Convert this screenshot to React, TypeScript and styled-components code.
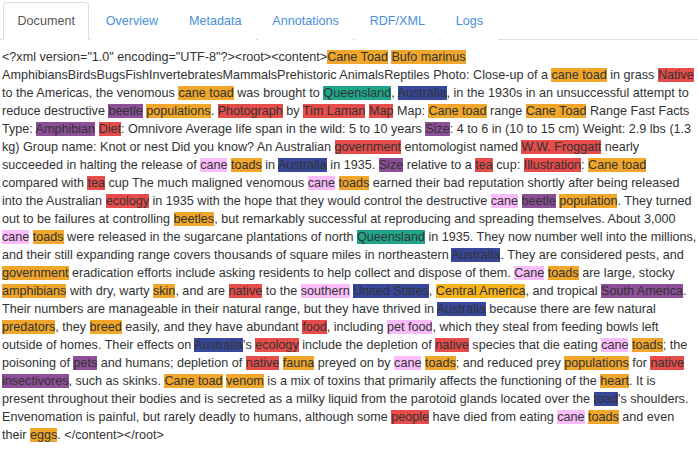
import React from "react";
import styled, { createGlobalStyle } from "styled-components";

const Global = createGlobalStyle`
  html, body { margin: 0; padding: 0; background: #fff; }
  body { font-family: "Liberation Sans", Arial, sans-serif; font-size: 12.6px; color: #333; }
`;

type Tone = "o" | "r" | "p" | "b" | "t" | "k" | "y";

const toneColors: Record<Tone, string> = {
  o: "#efa62a",
  r: "#e54c4a",
  p: "#8c4f98",
  b: "#37479a",
  t: "#1fa58a",
  k: "#fbbcfb",
  y: "#f6b31b",
};

const Page = styled.div`
  width: 698px;
  min-height: 454px;
`;

const TabBar = styled.ul`
  list-style: none;
  margin: 2px 0 0;
  padding: 0 0 0 3px;
  display: flex;
  border-bottom: 1px solid #ddd;
`;

const TabItem = styled.li`
  margin: 0 1.8px -1px 0;
`;

const TabLink = styled.a<{ $active?: boolean }>`
  display: block;
  padding: 9px 13.5px;
  line-height: 18px;
  font-size: 12.6px;
  border: 1px solid ${(p) => (p.$active ? "#ddd" : "transparent")};
  border-bottom-color: ${(p) => (p.$active ? "#fff" : "transparent")};
  border-radius: 4px 4px 0 0;
  background: #fff;
  color: ${(p) => (p.$active ? "#555" : "#4a90d9")};
  text-decoration: none;
  cursor: pointer;
`;

const Content = styled.div`
  padding: 8px 0 0 2px;
  line-height: 18px;
  font-size: 12.6px;
  color: #333;
`;

const Mark = styled.span<{ $tone: Tone }>`
  background: ${(p) => toneColors[p.$tone]};
`;

const RAW = `<?xml version="1.0" encoding="UTF-8"?><root><content>{o:Cane Toad} {o:Bufo marinus} AmphibiansBirdsBugsFishInvertebratesMammalsPrehistoric AnimalsReptiles Photo: Close-up of a {o:cane toad} in grass {r:Native} to the Americas, the venomous {o:cane toad} was brought to {t:Queensland}, {b:Australia}, in the 1930s in an unsuccessful attempt to reduce destructive {p:beetle} {o:populations}. {r:Photograph} by {r:Tim Laman} {r:Map} Map: {o:Cane toad} range {o:Cane Toad} Range Fast Facts Type: {p:Amphibian} {r:Diet}: Omnivore Average life span in the wild: 5 to 10 years {p:Size}: 4 to 6 in (10 to 15 cm) Weight: 2.9 lbs (1.3 kg) Group name: Knot or nest Did you know? An Australian {r:government} entomologist named {r:W.W. Froggatt} nearly succeeded in halting the release of {k:cane} {o:toads} in {b:Australia} in 1935. {p:Size} relative to a {r:tea} cup: {r:Illustration}: {o:Cane toad} compared with {r:tea} cup The much maligned venomous {k:cane} {o:toads} earned their bad reputation shortly after being released into the Australian {r:ecology} in 1935 with the hope that they would control the destructive {k:cane} {p:beetle} {o:population}. They turned out to be failures at controlling {o:beetles}, but remarkably successful at reproducing and spreading themselves. About 3,000 {k:cane} {o:toads} were released in the sugarcane plantations of north {t:Queensland} in 1935. They now number well into the millions, and their still expanding range covers thousands of square miles in northeastern {b:Australia}. They are considered pests, and {o:government} eradication efforts include asking residents to help collect and dispose of them. {k:Cane} {o:toads} are large, stocky {o:amphibians} with dry, warty {o:skin}, and are {r:native} to the {k:southern} {b:United States}, {y:Central America}, and tropical {p:South America}. Their numbers are manageable in their natural range, but they have thrived in {b:Australia} because there are few natural {o:predators}, they {o:breed} easily, and they have abundant {r:food}, including {k:pet food}, which they steal from feeding bowls left outside of homes. Their effects on {b:Australia}'s {r:ecology} include the depletion of {r:native} species that die eating {k:cane} {o:toads}; the poisoning of {p:pets} and humans; depletion of {r:native} {o:fauna} preyed on by {k:cane} {o:toads}; and reduced prey {o:populations} for {r:native} {p:insectivores}, such as skinks. {o:Cane toad} {o:venom} is a mix of toxins that primarily affects the functioning of the {o:heart}. It is present throughout their bodies and is secreted as a milky liquid from the parotoid glands located over the {b:toad}'s shoulders. Envenomation is painful, but rarely deadly to humans, although some {r:people} have died from eating {k:cane} {o:toads} and even their {o:eggs}. </content></root>`;

type Seg = { text: string; tone?: Tone };

function parse(src: string): Seg[] {
  const out: Seg[] = [];
  const re = /\{([orpbtky]):([^}]+)\}/g;
  let last = 0;
  let m: RegExpExecArray | null;
  while ((m = re.exec(src))) {
    if (m.index > last) out.push({ text: src.slice(last, m.index) });
    out.push({ text: m[2], tone: m[1] as Tone });
    last = m.index + m[0].length;
  }
  if (last < src.length) out.push({ text: src.slice(last) });
  return out;
}

const tabs = ["Document", "Overview", "Metadata", "Annotations", "RDF/XML", "Logs"];

export default function App() {
  const segs = parse(RAW);
  return (
    <Page>
      <Global />
      <TabBar>
        {tabs.map((t, i) => (
          <TabItem key={t}>
            <TabLink $active={i === 0}>{t}</TabLink>
          </TabItem>
        ))}
      </TabBar>
      <Content>
        {segs.map((s, i) =>
          s.tone ? (
            <Mark key={i} $tone={s.tone}>
              {s.text}
            </Mark>
          ) : (
            <React.Fragment key={i}>{s.text}</React.Fragment>
          )
        )}
      </Content>
    </Page>
  );
}
